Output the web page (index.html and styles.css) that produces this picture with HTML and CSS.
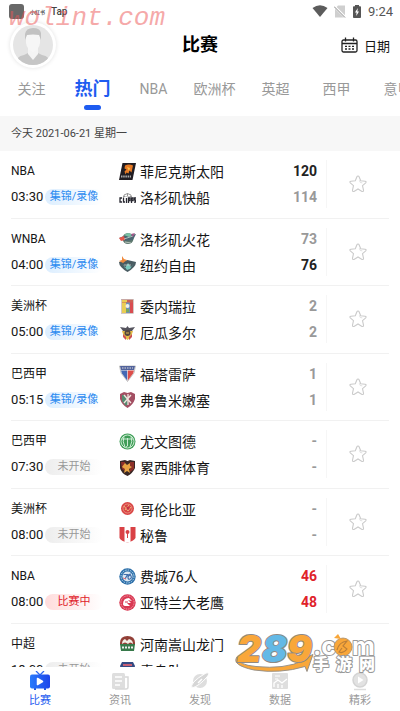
FILE: index.html
```html
<!DOCTYPE html>
<html lang="zh-CN">
<head>
<meta charset="utf-8">
<meta name="viewport" content="width=device-width, initial-scale=1">
<title>比赛</title>
<link rel="stylesheet" href="styles.css">
</head>
<body>
<svg width="0" height="0" class="defs" aria-hidden="true">
  <symbol id="star" viewBox="0 0 20 20"><path d="M10 2 Q10.8 2 11.2 3 L12.7 6.8 L17 7.2 Q18.8 7.6 17.7 8.9 L14.5 11.7 L15.5 16.2 Q15.6 18 14 17.4 L10 15 L6 17.4 Q4.4 18 4.5 16.2 L5.5 11.7 L2.3 8.9 Q1.2 7.6 3 7.2 L7.3 6.8 L8.8 3 Q9.2 2 10 2Z" fill="none" stroke="#cbcbcb" stroke-width="1.1"/><path d="M11.3 6.3l1 2.2 2 .4" fill="none" stroke="#d8d8d8" stroke-width=".8"/></symbol>
</svg>
<div class="app">
  <div class="watermark">wolint.com</div>
  <div class="status">
    <span class="status-app"></span>
    <span class="status-mini">小红书</span>
    <span class="status-tap">Tap</span>
    <span class="status-space"></span>
    <svg width="16" height="12" viewBox="0 0 16 12"><path d="M.5 3Q8-2.4 15.5 3L8 12Z" fill="#5c5c5c"/></svg>
    <svg width="12" height="13" viewBox="0 0 12 13"><path d="M4 .5h7v12H1V4z" fill="#cfcfcf"/><path d="M0 1l12 12" stroke="#fff" stroke-width="2.4"/><path d="M0 1.5l11 11" stroke="#888" stroke-width="1"/></svg>
    <svg width="10" height="13" viewBox="0 0 10 13"><path d="M3 0h4v1.2h1.2Q9 1.2 9 2v10q0 1-.8 1H1.8Q1 13 1 12V2q0-.8.8-.8H3z" fill="#555"/><path d="M5.8 3L3 7.5h1.6L4.2 11 7 6.5H5.4z" fill="#fff"/></svg>
    <span class="clock">9:24</span>
  </div>
  <header class="header">
    <button class="avatar" aria-label="我的">
      <svg width="40" height="40" viewBox="0 0 40 40"><defs><clipPath id="av"><circle cx="20" cy="20" r="20"/></clipPath></defs><g clip-path="url(#av)"><rect width="40" height="40" fill="#e5e5e5"/><path d="M2 40Q3 31 11 30l4-2h10l4 2q8 1 9 10z" fill="#c6c6c6"/><path d="M15 23h10v6l-5 6-5-6z" fill="#f4f4f4"/><path d="M13 12q0-7 7-7t7 7v6q-1 7-7 9-6-2-7-9z" fill="#f6f6f6"/><path d="M12 15V9q1-6 8-6t8 5v7l-2-5q-6-1-12 0z" fill="#c2c2c2"/></g></svg>
    </button>
    <h1>比赛</h1>
    <button class="date-btn">
      <svg width="17" height="16" viewBox="0 0 17 16" fill="none" stroke="#222" stroke-width="1.3"><rect x="1" y="3" width="15" height="12" rx="1.5"/><path d="M1 6.5h15M4.5.5v4M12.5.5v4"/><path d="M4 9.3h9M4 12h9" stroke-dasharray="2 1.5"/></svg>
      <span>日期</span>
    </button>
  </header>
  <nav class="tabs">
    <a href="#">关注</a><a href="#" class="active">热门</a><a href="#">NBA</a><a href="#">欧洲杯</a><a href="#">英超</a><a href="#">西甲</a><a href="#">意甲</a>
  </nav>
  <div class="day">今天 2021-06-21 星期一</div>
  <main class="scroller">
    <div class="list">
      <section class="match">
        <div class="meta"><div class="league">NBA</div><div class="when"><time>03:30</time><span class="tag replay">集锦/录像</span></div></div>
        <div class="teams">
          <div class="team"><svg viewBox="0 0 17 17"><path d="M3.5 0H17l-3.500 17H0z" fill="#211d22"/><path d="M6 2.500q4-2 8 0l-1.500 7-2-2-1 3-2-1-1 2-1-3 2-2-2-1z" fill="#e87b25"/><path d="M8 4l3 1-1 3z" fill="#fbc14c"/><path d="M2 13.5h10" stroke="#aaa" stroke-width="2" stroke-dasharray="1.5 .7"/></svg><span>菲尼克斯太阳</span><b class="win">120</b></div>
          <div class="team"><svg viewBox="0 0 17 17"><path d="M5 6q3.500-3 7 0M8.500 4v3" fill="none" stroke="#999" stroke-width="1"/><path d="M4 8V6.500h2v1h5v-1h2V8z" fill="#999"/><g fill="none" stroke="#292932" stroke-width="1.3"><path d="M3 9H1v4h2M4.500 8.500V13H6M7.500 9v5M9.500 14V9h1.500v2.500H9.500M12.500 14V9H14v2.500h-1.500M17 9h-1.500v2h1v2.200H15"/></g></svg><span>洛杉矶快船</span><b>114</b></div>
        </div>
        <button class="fav" aria-label="收藏"><svg><use href="#star"/></svg></button>
      </section>
      <section class="match">
        <div class="meta"><div class="league">WNBA</div><div class="when"><time>04:00</time><span class="tag replay">集锦/录像</span></div></div>
        <div class="teams">
          <div class="team"><svg viewBox="0 0 17 17"><circle cx="9" cy="8.5" r="5.5" fill="#607a70"/><path d="M0 8l5-2 12-2-3 6-8 1z" fill="#4a6672"/><path d="M0 8l5-2 1 4-4 1z" fill="#e5594c"/><path d="M5 5q5-4 8 0l-3 2z" fill="#7ac0a4"/><path d="M5 9l9-3M6 12l6 1" stroke="#dadfda" stroke-width=".7"/><path d="M12 4l4-1-2 4z" fill="#a2588b"/></svg><span>洛杉矶火花</span><b>73</b></div>
          <div class="team"><svg viewBox="0 0 17 17"><path d="M0 6l8.500-2L17 6q0 5-8.500 10Q0 11 0 6z" fill="#4a5c62"/><path d="M3 7l3 5 3-5 3 4 3-4-4 6-3 1z" fill="#79c8bd"/><path d="M3 0l2 3 3 1-4 3-4-2 3-1z" fill="#f08a3d"/><path d="M5 9h7" stroke="#ddd" stroke-width=".7"/></svg><span>纽约自由</span><b class="win">76</b></div>
        </div>
        <button class="fav" aria-label="收藏"><svg><use href="#star"/></svg></button>
      </section>
      <section class="match">
        <div class="meta"><div class="league">美洲杯</div><div class="when"><time>05:00</time><span class="tag replay">集锦/录像</span></div></div>
        <div class="teams">
          <div class="team"><svg viewBox="0 0 17 17"><path d="M3 2h4v13H3z" fill="#e9cd54"/><path d="M7 2h4v13H7z" fill="#7190b4"/><path d="M11 2h3v13h-3z" fill="#d94c50"/><path d="M3 1.5h11v3H3z" fill="#cc6054"/><path d="M3 3h5" stroke="#e9cd54" stroke-width="2"/><circle cx="8.5" cy="8" r="2" fill="#eee"/><path d="M7 11h3v3H7z" fill="#79a862"/><rect x="2.5" y="1.5" width="12" height="14" fill="none" stroke="#b6a4a0" stroke-width=".6"/></svg><span>委内瑞拉</span><b>2</b></div>
          <div class="team"><svg viewBox="0 0 17 17"><path d="M1 3l6 1 1.500-2L10 4l6-1-3 4-3 1H7L4 7z" fill="#55545e"/><path d="M3 7h11l-2 6-3.500 3L5 13z" fill="#e4bc48"/><path d="M4 10l3 3v3l-3-3zM13 10l-3 3v3l3-3z" fill="#cc4f53"/><circle cx="8.5" cy="9" r="3" fill="#54463e"/><path d="M7 9h3" stroke="#dfb650"/></svg><span>厄瓜多尔</span><b>2</b></div>
        </div>
        <button class="fav" aria-label="收藏"><svg><use href="#star"/></svg></button>
      </section>
      <section class="match">
        <div class="meta"><div class="league">巴西甲</div><div class="when"><time>05:15</time><span class="tag replay">集锦/录像</span></div></div>
        <div class="teams">
          <div class="team"><svg viewBox="0 0 17 17"><path d="M.5 1h16L15 8l-6.500 8.500L2 8z" fill="#f2f2f2" stroke="#777" stroke-width=".4"/><path d="M1 1h15l-1 4H2z" fill="#52639c"/><path d="M3 3h11" stroke="#ddd" stroke-width="1.2" stroke-dasharray="1.5 1"/><path d="M2 5.500h6.200v10L3 8.500z" fill="#4468b4"/><path d="M8.800 5.500H15l-1 3-5.200 7z" fill="#dc4e4a"/></svg><span>福塔雷萨</span><b>1</b></div>
          <div class="team"><svg viewBox="0 0 17 17"><path d="M1 3l4-2 3.500 1L12 1l4 2v5q-2 6-7.500 9Q3 14 1 8z" fill="#a34f63"/><path d="M3 4h4l2 9-2 2-4-5z" fill="#558b70"/><path d="M5 4l7 8M12 4L5 12M9 3v11" stroke="#f3e4df" stroke-width="1.3"/></svg><span>弗鲁米嫩塞</span><b>1</b></div>
        </div>
        <button class="fav" aria-label="收藏"><svg><use href="#star"/></svg></button>
      </section>
      <section class="match">
        <div class="meta"><div class="league">巴西甲</div><div class="when"><time>07:30</time><span class="tag pending">未开始</span></div></div>
        <div class="teams">
          <div class="team"><svg viewBox="0 0 17 17"><circle cx="8.5" cy="8.5" r="8" fill="#3f9d57"/><g fill="none" stroke="#d9f3df" stroke-width=".9"><circle cx="8.5" cy="8.5" r="6.5"/><path d="M5 3q-2 6 1 11M8.500 5v8l-1.500 1M12 3q2 6-1 11M3 6h11"/></g></svg><span>尤文图德</span><b>-</b></div>
          <div class="team"><svg viewBox="0 0 17 17"><path d="M1 2l5-1 2.500 1L11 1l5 1v7q-2 5-7.500 8Q2 14 1 9z" fill="#392725"/><path d="M2 3h4v9L3 10zM11 3h4v7l-4 3z" fill="#8d3029"/><path d="M6 4l2 2 3-2v3l2 1-3 2 1 4-3-2-3 2 1-4-3-2z" fill="#e7a443"/></svg><span>累西腓体育</span><b>-</b></div>
        </div>
        <button class="fav" aria-label="收藏"><svg><use href="#star"/></svg></button>
      </section>
      <section class="match">
        <div class="meta"><div class="league">美洲杯</div><div class="when"><time>08:00</time><span class="tag pending">未开始</span></div></div>
        <div class="teams">
          <div class="team"><svg viewBox="0 0 17 17"><circle cx="8.5" cy="8.5" r="6.500" fill="#d94645"/><circle cx="8.5" cy="8.5" r="4.5" fill="none" stroke="#efb1a0" stroke-width=".6"/><path d="M5 6l4 5 3-4M6 10l4-5" fill="none" stroke="#f6cd86" stroke-width=".8"/><circle cx="9" cy="8" r="1.5" fill="#c43045"/></svg><span>哥伦比亚</span><b>-</b></div>
          <div class="team"><svg viewBox="0 0 17 17"><path d="M.5 1h16v11q-2 3-8 4.500Q2 15 .5 12z" fill="#d94145"/><path d="M5.500 1h6v15l-3 .5-3-.5z" fill="#fff"/><circle cx="8.5" cy="6" r="2" fill="#d94145"/><path d="M8.500 6v6" stroke="#d94145"/></svg><span>秘鲁</span><b>-</b></div>
        </div>
        <button class="fav" aria-label="收藏"><svg><use href="#star"/></svg></button>
      </section>
      <section class="match">
        <div class="meta"><div class="league">NBA</div><div class="when"><time>08:00</time><span class="tag live">比赛中</span></div></div>
        <div class="teams">
          <div class="team"><svg viewBox="0 0 17 17"><circle cx="8.5" cy="8.5" r="8.2" fill="#2d6fa9"/><circle cx="8.5" cy="8.5" r="6.5" fill="none" stroke="#b9d9ee" stroke-width="1" stroke-dasharray="1.5 1"/><circle cx="8.5" cy="8.5" r="5" fill="#dce8f2"/><path d="M4.500 6.500h4L6 11M12 6q-3 0-3 3t2 2 1-3-3 1" fill="none" stroke="#416fac" stroke-width="1.2"/><path d="M4 10l3 1" stroke="#e06c78"/></svg><span>费城76人</span><b class="on">46</b></div>
          <div class="team"><svg viewBox="0 0 17 17"><circle cx="8.5" cy="8.5" r="8.2" fill="#d93953"/><circle cx="8.5" cy="8.5" r="6.6" fill="none" stroke="#f5a9b4" stroke-width="1" stroke-dasharray="1 .8"/><path d="M4 10q0-6 6-6l3 3-4-1 3 3H8l3 3H7q-3 0-3-2z" fill="#fff"/><path d="M6 8h3" stroke="#d93953"/></svg><span>亚特兰大老鹰</span><b class="on">48</b></div>
        </div>
        <button class="fav" aria-label="收藏"><svg><use href="#star"/></svg></button>
      </section>
      <section class="match">
        <div class="meta"><div class="league">中超</div><div class="when"><time>18:00</time><span class="tag pending">未开始</span></div></div>
        <div class="teams">
          <div class="team"><svg viewBox="0 0 17 17"><path d="M1 8q0-7 7.500-7T16 8v2H1z" fill="#923f37"/><path d="M1 9h15l-1 7H2z" fill="#37794a"/><path d="M3 9q0-4 3-5l2 2 2-2q4 1 4 5-3-3-5 0-3-3-6 0z" fill="#f3eee5"/><path d="M3 12.5h11" stroke="#eee" stroke-width="2" stroke-dasharray="2 1"/></svg><span>河南嵩山龙门</span></div>
          <div class="team"><svg viewBox="0 0 17 17"><path d="M3 1h11l2 4-2 8-5.500 4L3 13 1 5z" fill="#344a82"/><path d="M4 4h9" stroke="#c55f74" stroke-width="2"/></svg><span>青岛队</span></div>
        </div>
      </section>
    </div>
  </main>
  <nav class="bottom">
    <a href="#" class="active"><svg viewBox="0 0 20 20"><defs><linearGradient id="tv"><stop stop-color="#2b7bfb"/><stop offset="1" stop-color="#1d45ea"/></linearGradient></defs><path d="M6 0l4 4 4-4" fill="none" stroke="#2d68f0" stroke-width="1.3"/><path d="M5 17v2M15 17v2" stroke="#2458d8" stroke-width="2"/><rect x="0" y="3.5" width="20" height="14" rx="2" fill="url(#tv)"/><path d="M7.500 7.500l5 3-5 3z" fill="#fff" stroke="#fff" stroke-width="1.5" stroke-linejoin="round"/></svg>比赛</a>
    <a href="#"><svg viewBox="0 0 20 20"><rect x="2" y="2" width="13" height="16" rx="1.5" fill="#dedede"/><path d="M15 6h3v10q0 2-2 2H5" fill="none" stroke="#d8d8d8" stroke-width="1.5"/><path d="M5 6h7M5 10h7M5 14h5" stroke="#fff" stroke-width="1.4"/></svg>资讯</a>
    <a href="#"><svg viewBox="0 0 20 20"><circle cx="10" cy="10" r="7" fill="#dedede"/><path d="M2 17Q-1 12 16 2q5-1 1 4Q9 15 2 17z" fill="#d6d6d6" stroke="#fff"/><path d="M8 12l4-4" stroke="#fff" stroke-width="1.5"/></svg>发现</a>
    <a href="#"><svg viewBox="0 0 20 20"><rect x="2" y="2" width="16" height="16" rx="1" fill="#dedede"/><path d="M5 5h5M5 8h3" stroke="#fff"/><path d="M4 16V12l4-3 4 3 5-4M8 17v-4M12 17v-3" fill="none" stroke="#fff" stroke-width="1.3"/></svg>数据</a>
    <a href="#"><svg viewBox="0 0 20 20"><circle cx="10" cy="9" r="7" fill="#e2e2e2" stroke="#d4d4d4" stroke-width="1.5"/><path d="M8 5.500l5.500 3.500L8 12.500z" fill="#fff"/><path d="M4 18.500h12" stroke="#ddd" stroke-width="1.5"/></svg>精彩</a>
  </nav>
  <svg class="site-logo" width="144" height="44" viewBox="0 0 144 44" aria-label="289.com 手游网">
    <path d="M3 25Q4 33 22 34.500q28 3 48-6l-3-1 12-5-6 17-2-5Q46 42 20 38-3 33 3 25z" fill="#f9a73a" stroke="#8f8a84" stroke-width=".9"/>
    <g class="digits"><text x="3" y="30" fill="#f9a73a">2</text><text x="28" y="30" fill="#63b9e6">8</text><text x="53" y="30" fill="#f9a73a">9</text></g>
    <g class="com"><text x="79" y="23">.c</text><text x="118" y="23">m</text></g>
    <circle cx="109" cy="15" r="9" fill="#f9a73a" stroke="#aa8c66" stroke-width=".8"/><path d="M100 6l4-4 3 5z" fill="#f9a73a"/><path d="M103 18q2-8 10-9l-4 5 4 3q-4 5-8 3l3-4" fill="none" stroke="#bb7f38" stroke-width="1.2"/>
    <g class="cn"><text x="79" y="38">手</text><text x="102" y="38">游</text><text x="125" y="38">网</text></g>
  </svg>
</div>
</body>
</html>
```
FILE: styles.css
```css
* { box-sizing: border-box; }
body {
  margin: 0;
  background: #fff;
  color: #161616;
  font-family: Roboto, "Noto Sans CJK SC", sans-serif;
}
button { border: 0; padding: 0; background: none; font: inherit; color: inherit; }
a { color: inherit; text-decoration: none; }
svg { display: block; flex: none; }
.defs { position: absolute; }
.app {
  position: relative;
  display: flex;
  flex-direction: column;
  height: 100vh;
  overflow: hidden;
}
.watermark {
  position: absolute;
  left: 9px;
  top: 2px;
  z-index: 2;
  font: italic 26px/32px "Liberation Mono", monospace;
  color: rgba(236, 84, 84, .5);
  pointer-events: none;
}

.status {
  display: flex;
  align-items: center;
  height: 22px;
  padding: 0 7px 0 9px;
  gap: 6px;
}
.status-app { width: 15px; height: 15px; border-radius: 3px; background: #686868; }
.status-mini { font-size: 5px; font-weight: 700; color: #555; }
.status-tap { font-size: 10px; font-weight: 500; color: #444; }
.status-space { flex: 1; }
.clock { font-size: 13px; color: #555; }

.header {
  display: grid;
  grid-template-columns: 1fr auto 1fr;
  align-items: center;
  height: 46px;
  padding: 0 10px;
}
.avatar {
  justify-self: start;
  padding: 3px;
  border-radius: 50%;
  background: #fff;
  box-shadow: 0 0 4px rgba(0, 0, 0, .12);
}
.header h1 { margin: 0; font-size: 18px; line-height: 24px; font-weight: 700; color: #000; }
.date-btn { justify-self: end; display: flex; align-items: center; gap: 6px; font-size: 13px; }

.tabs {
  display: flex;
  height: 48px;
  padding-left: 1px;
  overflow: hidden;
  font-size: 14px;
  line-height: 42px;
  color: #999;
}
.tabs a { flex: none; width: 61px; text-align: center; }
.tabs .active { font-size: 18px; font-weight: 700; color: #1e5cf0; }
.tabs .active::after {
  content: "";
  display: block;
  width: 17px;
  height: 5px;
  margin: -5px auto 0;
  border-radius: 3px;
  background: #1e5cf0;
}

.day {
  height: 35px;
  padding: 0 11px;
  background: #f7f7f7;
  font-size: 11px;
  line-height: 35px;
  color: #444;
}

.scroller { flex: 1; min-height: 0; overflow: hidden; }
.list {
  display: grid;
  grid-auto-rows: 1fr;
  height: calc(100% + 24px);
  margin: 0 11px;
}
.match {
  display: grid;
  grid-template-columns: 108px 1fr 63px;
  align-items: center;
  min-height: 0;
  border-bottom: 1px solid #f1f1f1;
}
.meta { line-height: 26px; }
.league { font-size: 12px; }
.when { display: flex; align-items: center; gap: 2px; }
.when time { width: 32px; font-size: 13px; }
.tag {
  width: 58px;
  height: 16px;
  border-radius: 8px;
  font-size: 11px;
  line-height: 16px;
  text-align: center;
}
.replay { background: linear-gradient(90deg, #dceeff, #fff); color: #2b8af0; }
.pending { background: linear-gradient(90deg, #ededed, #fff); color: #999; }
.live { background: linear-gradient(90deg, #ffdcdc, #fff); color: #e0222a; }
.team { display: flex; align-items: center; gap: 4px; height: 26px; font-size: 14px; }
.team svg { width: 17px; height: 17px; }
.team b { margin-left: auto; padding-right: 9px; color: #999; }
.team .win { color: #222; }
.team .on { color: #e0222a; }
.teams { white-space: nowrap; }
.fav {
  display: flex;
  justify-content: center;
  align-items: center;
  height: 48px;
  border-left: 1px solid #f6f6f6;
}
.fav svg { width: 20px; height: 20px; }

.bottom {
  display: flex;
  flex: none;
  height: 44px;
  padding-top: 4px;
  background: #fff;
  font-size: 11px;
  line-height: 16px;
  color: #999;
}
.bottom a { flex: 1; display: flex; flex-direction: column; align-items: center; gap: 2px; }
.bottom svg { width: 20px; height: 20px; }
.bottom .active { color: #1e5cf0; }

.site-logo { position: absolute; right: 22px; bottom: 35px; }
.site-logo text { paint-order: stroke; stroke-linejoin: round; }
.digits { font: italic 900 37px Inter, sans-serif; stroke: #8f8a84; stroke-width: 2px; }
.com { font: 700 25px Inter, sans-serif; fill: #fff; stroke: #999; stroke-width: 2px; }
.cn { font: 900 16px "Noto Sans CJK SC", sans-serif; fill: #fff; stroke: #999; stroke-width: 2px; }
```
